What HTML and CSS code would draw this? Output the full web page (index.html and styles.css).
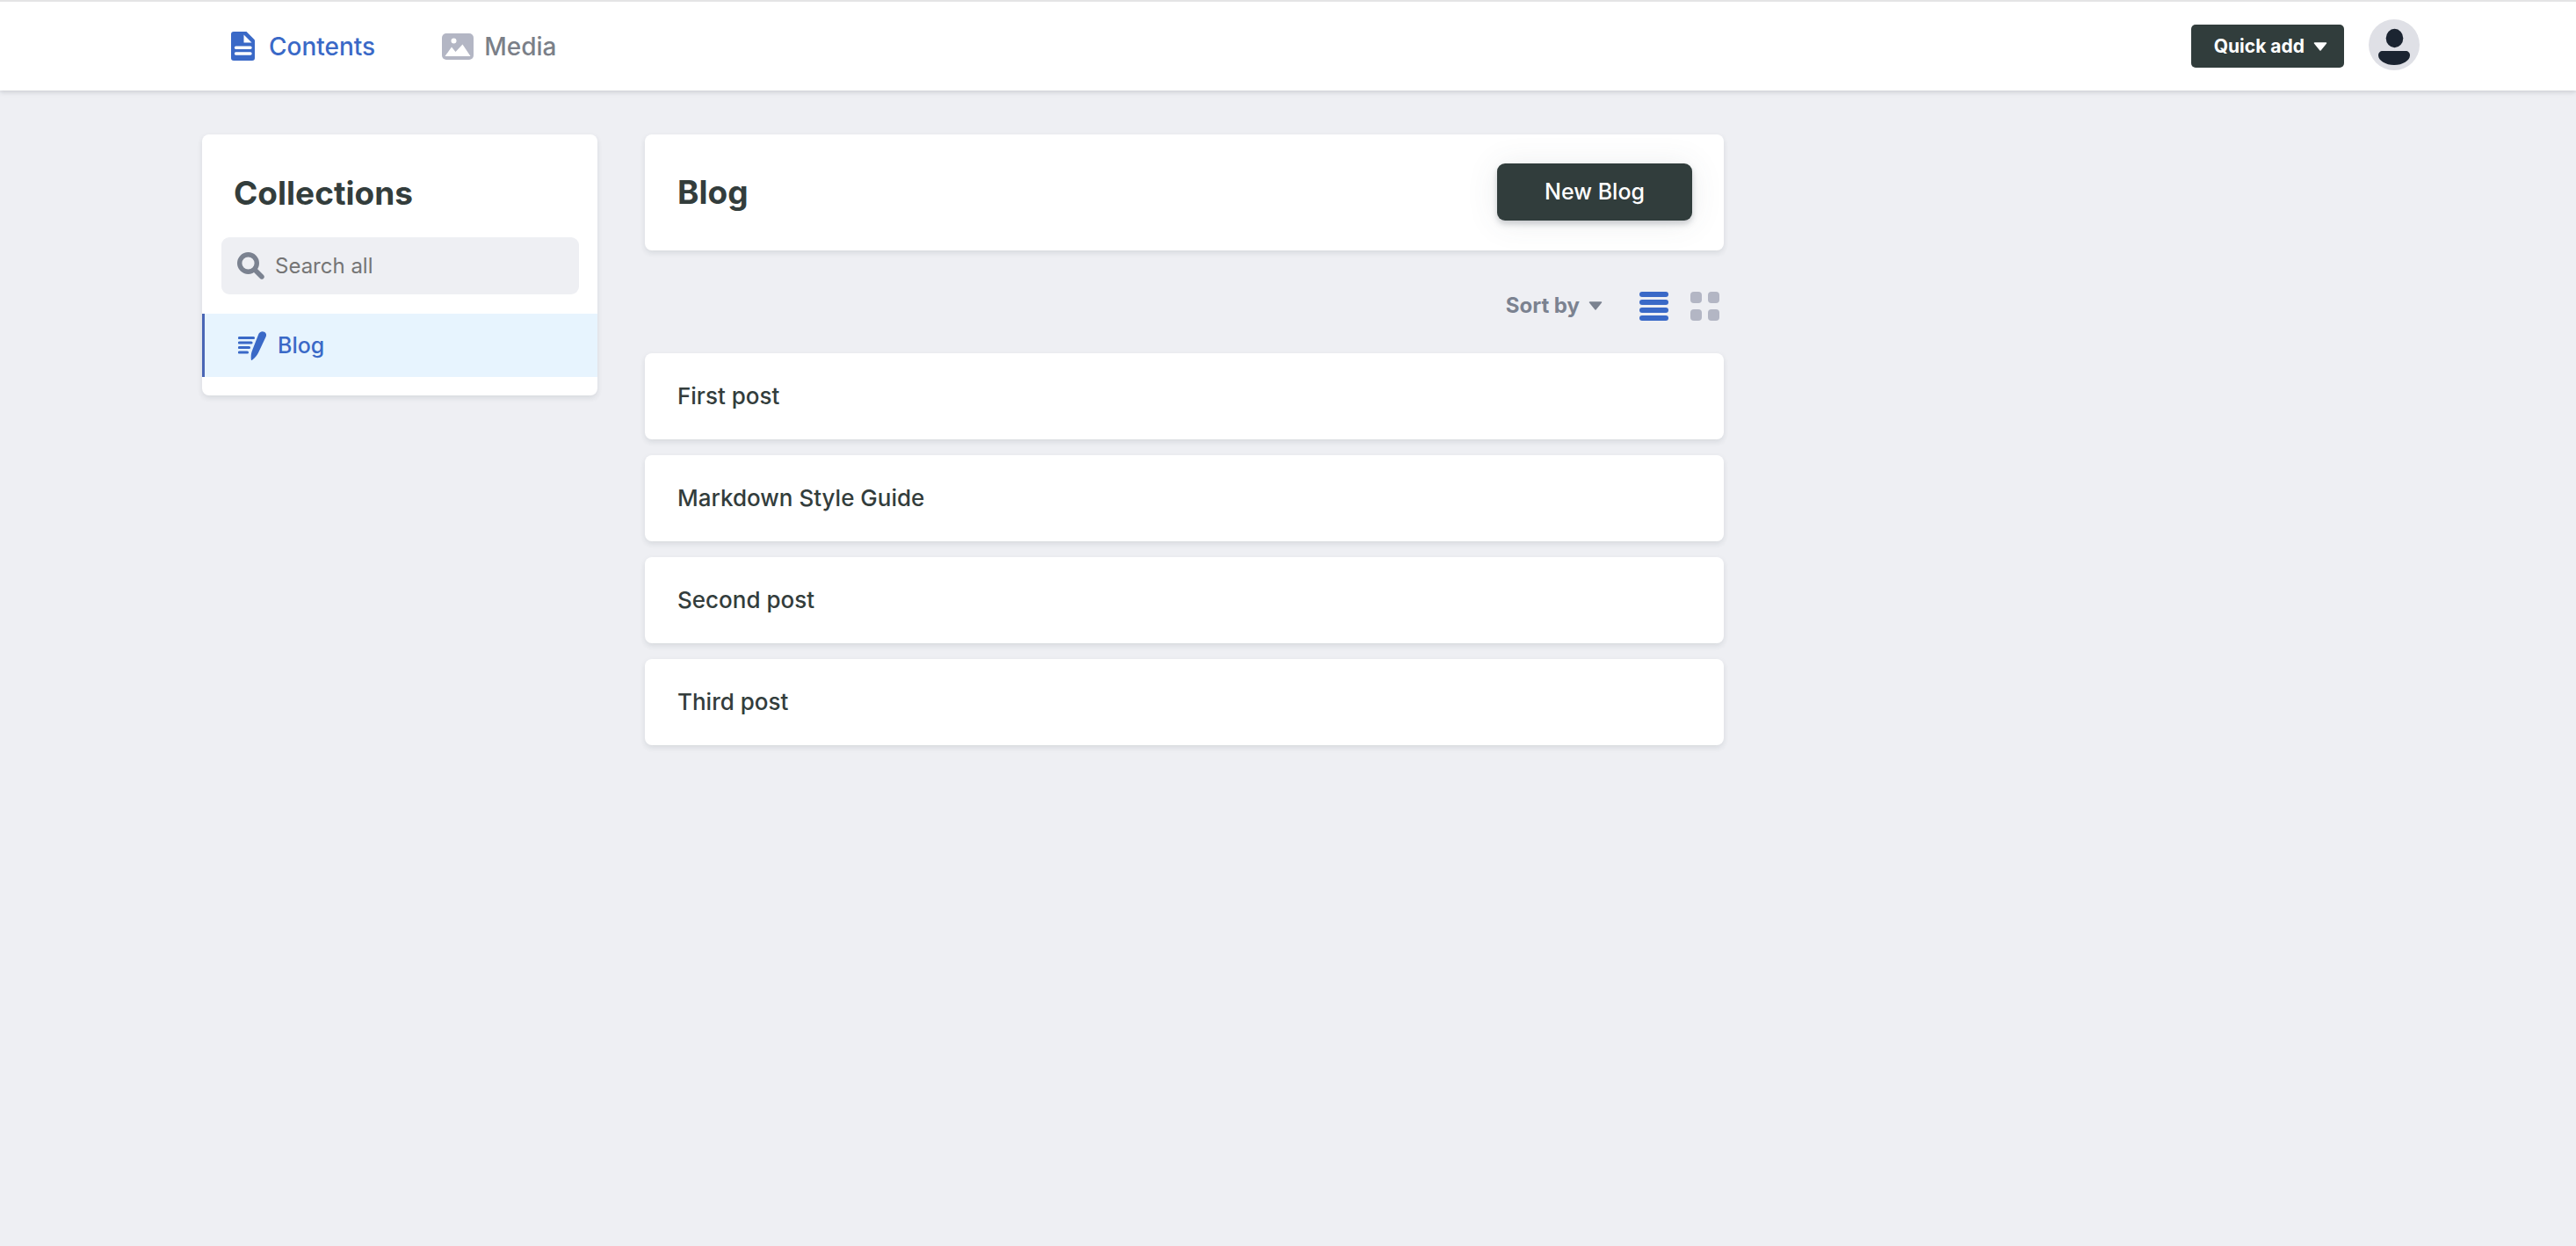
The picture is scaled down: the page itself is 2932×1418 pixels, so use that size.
FILE: index.html
```html
<!DOCTYPE html>
<html lang="en">
<head>
<meta charset="utf-8">
<title>Contents</title>
<link rel="stylesheet" href="styles.css">
</head>
<body>
<header class="app-header">
  <div class="header-inner">
    <nav class="main-nav">
      <a class="nav-link active" href="#contents">
        <svg class="icon-page" viewBox="0 0 27 33" width="27" height="33" aria-hidden="true">
          <path d="M3 0h14.500l9.500 9.500V30a3 3 0 0 1-3 3H3a3 3 0 0 1-3-3V3a3 3 0 0 1 3-3z" fill="currentColor"/>
          <path d="M14.500 3.500v9h9z" fill="#fff"/>
          <path d="M5.500 18.200h16.500M5.500 25h16.500" stroke="#fff" stroke-width="3.400" stroke-linecap="round"/>
        </svg>
        <span>Contents</span>
      </a>
      <a class="nav-link media" href="#media">
        <svg class="icon-media" viewBox="0 0 36 30" width="36" height="30" aria-hidden="true">
          <rect width="36" height="30" rx="5" fill="#b3b6c4"/>
          <circle cx="13.500" cy="8.500" r="3" fill="#fff"/>
          <path d="M3.500 26l7.500-10.500 4.500 5.500 8-8.500L32.500 26z" fill="#fff"/>
        </svg>
        <span>Media</span>
      </a>
    </nav>
    <div class="header-actions">
      <button class="quick-add" type="button">Quick add
        <svg viewBox="0 0 16 10" width="16" height="10" aria-hidden="true"><path d="M1.500 1h13L8 9z" fill="currentColor" stroke="currentColor" stroke-width="1.500" stroke-linejoin="round"/></svg>
      </button>
      <button class="avatar" type="button" aria-label="Account">
        <svg viewBox="0 0 58 58" width="58" height="58" aria-hidden="true">
          <circle cx="29" cy="29" r="29" fill="#dfe0e6"/>
          <ellipse cx="29.500" cy="21.500" rx="9.800" ry="10.700" fill="#1b2431"/>
          <path d="M16 36h26c3 0 5 2 5 5 0 6-8.500 11-18 11s-18-5-18-11c0-3 2-5 5-5z" fill="#1b2431"/>
        </svg>
      </button>
    </div>
  </div>
</header>
<main class="layout">
  <aside class="card sidebar">
    <h2 class="title sidebar-title">Collections</h2>
    <label class="search">
      <svg viewBox="0 0 31 31" width="31" height="31" aria-hidden="true">
        <circle cx="12.500" cy="12.500" r="9.800" fill="none" stroke="currentColor" stroke-width="5.400"/>
        <path d="M20 20l8 8" stroke="currentColor" stroke-width="5.400" stroke-linecap="round"/>
      </svg>
      <input type="text" placeholder="Search all" aria-label="Search all">
    </label>
    <a class="collection-link" href="#blog">
      <svg viewBox="0 0 32 33" width="32" height="33" aria-hidden="true">
        <path d="M1.500 7.500h16M1.500 13h13.500M1.500 18.500h11M1.500 24h9" stroke="currentColor" stroke-width="3.200" stroke-linecap="round"/>
        <path d="M23.500 2.800C25 .3 27.500-.4 29.800.7c2.300 1.100 2.800 3.400 1.700 5.800L23 24.500c-1.600 3.400-3.500 5.500-7 8.200-.6.400-1.100.2-1.200-.5-.4-4.300.1-7.800 1.600-11.200z" fill="currentColor"/>
      </svg>
      <span>Blog</span>
    </a>
  </aside>
  <section class="content">
    <div class="card content-head">
      <h1 class="title">Blog</h1>
      <a class="new-button" href="#new">New Blog</a>
    </div>
    <div class="controls">
      <button class="sort" type="button">Sort by
        <svg viewBox="0 0 16 10" width="16" height="10" aria-hidden="true"><path d="M1.500 1h13L8 9z" fill="currentColor" stroke="currentColor" stroke-width="1.500" stroke-linejoin="round"/></svg>
      </button>
      <div class="view-modes">
        <button class="view active" type="button" aria-label="List view">
          <svg viewBox="0 0 33 33" width="33" height="33" aria-hidden="true"><g fill="currentColor"><rect width="33" height="6" rx="3"/><rect y="9" width="33" height="6" rx="3"/><rect y="18" width="33" height="6" rx="3"/><rect y="27" width="33" height="6" rx="3"/></g></svg>
        </button>
        <button class="view" type="button" aria-label="Grid view">
          <svg viewBox="0 0 33 33" width="33" height="33" aria-hidden="true"><g fill="currentColor"><rect width="13" height="13" rx="4"/><rect x="20" width="13" height="13" rx="4"/><rect y="20" width="13" height="13" rx="4"/><rect x="20" y="20" width="13" height="13" rx="4"/></g></svg>
        </button>
      </div>
    </div>
    <ul class="entries">
      <li class="card"><a class="entry" href="#first-post">First post</a></li>
      <li class="card"><a class="entry" href="#markdown-style-guide">Markdown Style Guide</a></li>
      <li class="card"><a class="entry" href="#second-post">Second post</a></li>
      <li class="card"><a class="entry" href="#third-post">Third post</a></li>
    </ul>
  </section>
</main>
</body>
</html>
```
FILE: styles.css
```css
* { box-sizing: border-box; }

body {
  margin: 0;
  background: #eeeff3;
  color: #333d3c;
  font: 500 25px/36px Inter, "Liberation Sans", sans-serif;
}

a { color: inherit; text-decoration: none; }
svg { display: block; flex: none; }

button {
  border: 0;
  padding: 0;
  background: none;
  color: inherit;
  font: inherit;
  cursor: pointer;
}

.app-header {
  border-top: 2px solid #e4e4e5;
  background: #fff;
  box-shadow: 0 2px 6px rgba(68, 74, 87, 0.1), 0 2px 4px rgba(68, 74, 87, 0.1);
}

.header-inner {
  display: flex;
  justify-content: space-between;
  max-width: 2576px;
  height: 101px;
  margin: 0 auto;
  padding-left: 85px;
}

.main-nav { display: flex; gap: 76px; }

.nav-link {
  display: flex;
  align-items: center;
  gap: 16px;
  color: #7b7f88;
  font-size: 28px;
}

.nav-link.media { gap: 12px; }
.nav-link.active { color: #3a69c7; }

.header-actions {
  display: flex;
  align-items: center;
  gap: 28px;
}

.quick-add {
  display: flex;
  align-items: center;
  gap: 10px;
  height: 49px;
  padding: 0 19px 0 26px;
  border-radius: 5px;
  background: #313d3c;
  color: #fff;
  font-size: 21px;
  font-weight: 700;
}

.avatar { margin-bottom: 4px; }

.layout {
  display: grid;
  grid-template-columns: 450px minmax(0, 1228px);
  gap: 54px;
  align-items: start;
  max-width: 2576px;
  margin: 0 auto;
  padding: 50px 52px;
}

.card {
  border-radius: 8px;
  background: #fff;
  box-shadow: 0 4px 6px rgba(68, 74, 87, 0.05), 0 2px 6px rgba(68, 74, 87, 0.08);
}

.title {
  margin: 0;
  font-size: 37px;
  font-weight: 700;
  line-height: 48px;
}

.sidebar { padding: 43px 0 21px; }
.sidebar-title { padding: 0 36px; }

.search {
  display: flex;
  align-items: center;
  gap: 12px;
  height: 65px;
  margin: 26px 21px 22px 22px;
  padding: 0 18px;
  border-radius: 9px;
  background: #eeeff3;
  color: #7b8290;
}

.search input {
  flex: 1;
  min-width: 0;
  border: 0;
  padding: 0;
  outline: 0;
  background: none;
  color: #333d3c;
  font: inherit;
  font-size: 24px;
  font-weight: 400;
}

.search input::placeholder { color: #757575; opacity: 1; }

.collection-link {
  display: flex;
  align-items: center;
  gap: 13px;
  height: 72px;
  padding-left: 38px;
  border-left: 3px solid #4a66b5;
  background: #e7f4fe;
  color: #3a69c7;
}

.content-head {
  display: flex;
  align-items: center;
  justify-content: space-between;
  padding: 33px 36px 34px 37px;
}

.new-button {
  padding: 14px 54px 15px;
  border-radius: 9px;
  background: #313d3c;
  color: #fff;
  box-shadow: 0 4px 6px rgba(68, 74, 87, 0.25), 0 2px 36px rgba(68, 74, 87, 0.1);
}

.controls {
  display: flex;
  align-items: center;
  justify-content: flex-end;
  gap: 42px;
  padding: 45px 5px 36px;
  color: #7b8290;
}

.sort {
  display: flex;
  align-items: center;
  gap: 10px;
  font-size: 24px;
  font-weight: 700;
}

.view-modes { display: flex; gap: 25px; }
.view { color: #b3b6c4; }
.view.active { color: #3a69c7; }

.entries {
  display: grid;
  gap: 18px;
  margin: 0;
  padding: 0;
  list-style: none;
}

.entry {
  display: block;
  padding: 31px 37px;
  font-size: 26px;
}
```
